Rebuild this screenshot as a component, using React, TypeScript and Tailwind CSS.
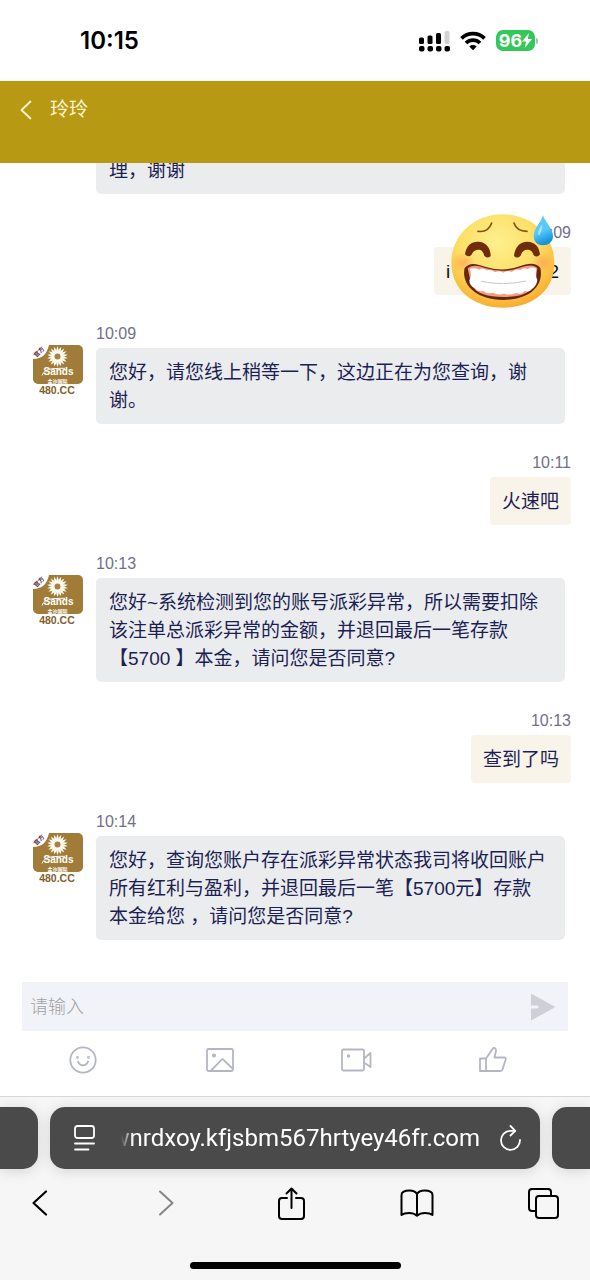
import React from 'react';

interface Message {
    id: number;
    from: 'agent' | 'user';
    time?: string;
    text: string;
    emoji?: boolean;
}

const messages: Message[] = [
    { id: 1, from: 'agent', text: '理，谢谢' },
    { id: 2, from: 'user', time: '10:09', text: 'i 2', emoji: true },
    { id: 3, from: 'agent', time: '10:09', text: '您好，请您线上稍等一下，这边正在为您查询，谢\n谢。' },
    { id: 4, from: 'user', time: '10:11', text: '火速吧' },
    {
        id: 5,
        from: 'agent',
        time: '10:13',
        text: '您好~系统检测到您的账号派彩异常，所以需要扣除\n该注单总派彩异常的金额，并退回最后一笔存款\n【5700 】本金，请问您是否同意?',
    },
    { id: 6, from: 'user', time: '10:13', text: '查到了吗' },
    {
        id: 7,
        from: 'agent',
        time: '10:14',
        text: '您好，查询您账户存在派彩异常状态我司将收回账户\n所有红利与盈利，并退回最后一笔【5700元】存款\n本金给您 ，请问您是否同意?',
    },
];

const rays = Array.from({ length: 18 }, (_, i) => i * 20);

const StatusBar = () => (
    <div className="flex h-[81px] shrink-0 items-center justify-between pl-[80px] pr-[52px] font-['Inter',sans-serif]">
        <span className="text-[24px] font-semibold leading-7 text-black">10:15</span>
        <div className="flex items-center gap-[10px]">
            <svg width="31" height="22" viewBox="0 0 31 22" aria-label="Signal">
                <rect x="0" y="7.500" width="5" height="6.500" rx="1.5" />
                <rect x="8.5" y="5.500" width="5" height="8.500" rx="1.5" />
                <rect x="17" y="3" width="5" height="11" rx="1.5" />
                <rect x="25.500" y="1" width="5" height="13" rx="1.5" fill="#d4d4d4" />
                <rect x="0" y="16" width="5.500" height="5.500" rx="2" />
                <rect x="8.5" y="16" width="5.500" height="5.500" rx="2" />
                <rect x="17" y="16" width="5.500" height="5.500" rx="2" />
                <rect x="25.500" y="16" width="5.500" height="5.500" rx="2" />
            </svg>
            <svg width="26" height="20" viewBox="0 0 26 20" fill="none" stroke="#000" strokeWidth="3.700" aria-label="Wi-Fi">
                <path d="M1.500 7.300a16.500 16.500 0 0 1 23 0" />
                <path d="M6 12a10 10 0 0 1 14 0" />
                <path d="M9.300 15.500a5.500 5.500 0 0 1 7.400 0L13 19.300z" fill="#000" stroke="none" />
            </svg>
            <div className="flex items-center gap-px">
                <div className="flex h-[21px] w-[39px] items-center justify-center rounded-[7px] bg-[#34c759] text-white">
                    <span className="text-[18px] font-bold leading-5">96</span>
                    <svg width="10" height="15" viewBox="0 0 10 15" fill="currentColor">
                        <path d="M7 0 0 8.500h4L2.800 15 10 6H5.800z" />
                    </svg>
                </div>
                <div className="h-[6px] w-[2px] rounded-r-full bg-[#a9bccb]" />
            </div>
        </div>
    </div>
);

const Avatar = () => (
    <svg className="mt-[21px] shrink-0 overflow-visible" width="50" height="50" viewBox="0 0 50 50" role="img" aria-label="Sands 480.CC">
        <path d="M16 0h29a5 5 0 0 1 5 5v29a5 5 0 0 1-5 5H5a5 5 0 0 1-5-5V14C9 14 14 9 16 0z" fill="#a07c38" />
        <g transform="translate(24.500 11.500)">
            {rays.map((angle) => (
                <path key={angle} d="M-1.300-4Q-1.500-7 0-10.500Q1.500-7 1.300-4z" fill="#fffaf0" transform={`rotate(${angle})`} />
            ))}
            <circle r="4.800" fill="#fffaf0" />
            <circle r="3" fill="#a58245" />
        </g>
        <g fontFamily="'Noto Sans CJK SC', sans-serif" fontWeight="700">
            <text x="6" y="9" fontSize="6" fill="#5b2340" textAnchor="middle" transform="rotate(-45 6 7)">官方</text>
            <text x="24.500" y="38" fontSize="5" fill="#fff" textAnchor="middle">金沙国际</text>
        </g>
        <path d="M9 30.500Q11 24.500 19 23.800T32 23.300" fill="none" stroke="#fff" strokeWidth="1" />
        <text x="25.500" y="30" fontSize="10" fontWeight="700" fontFamily="'Liberation Sans', sans-serif" fill="#fff" textAnchor="middle">Sands</text>
        <text x="24" y="48.500" fontSize="10.500" fontWeight="700" fontFamily="'Liberation Sans', sans-serif" fill="#80602c" textAnchor="middle">480.CC</text>
    </svg>
);

const GrinEmoji = () => (
    <svg className="absolute -top-[11px] right-[34px]" width="107" height="98" viewBox="69 36 321 294" role="img" aria-label="Grinning face with sweat">
        <defs>
            <radialGradient id="face" cx="0.45" cy="0.3" r="0.75">
                <stop offset="0" stopColor="#fdf08f" />
                <stop offset="0.5" stopColor="#fcdf66" />
                <stop offset="0.85" stopColor="#fbb93a" />
                <stop offset="1" stopColor="#f7a52c" />
            </radialGradient>
            <radialGradient id="cheek">
                <stop offset="0" stopColor="#ff9254" stopOpacity="0.55" />
                <stop offset="1" stopColor="#ff9254" stopOpacity="0" />
            </radialGradient>
            <linearGradient id="drop" x1="0" y1="0" x2="0.3" y2="1">
                <stop offset="0" stopColor="#62c9f2" />
                <stop offset="0.6" stopColor="#58c8f7" />
                <stop offset="1" stopColor="#1593dc" />
            </linearGradient>
        </defs>
        <path d="M229 43C315 43 385 105 385 190C385 273 318 323 232 323C143 323 76 270 76 188C76 105 145 43 229 43z" fill="url(#face)" />
        <ellipse cx="112" cy="187" rx="36" ry="30" fill="url(#cheek)" />
        <ellipse cx="350" cy="187" rx="34" ry="30" fill="url(#cheek)" />
        <g fill="none" stroke="#89500f" strokeWidth="5" strokeLinecap="round">
            <path d="M156 94Q187 98 197 69" />
            <path d="M264 69Q272 94 303 94" />
        </g>
        <g fill="#702d0a">
            <path d="M117 163C121 135 137 124 157 125C180 126 194 143 194 168Q185 178 175 167C171 153 165 148 156 149C146 150 140 155 136 165Q126 173 117 163z" />
            <path d="M264 168C267 140 282 125 304 125C326 125 340 140 342 163Q334 175 323 166C319 154 314 149 304 149C295 149 288 154 284 167Q273 178 264 168z" />
        </g>
        <path d="M116 204C132 184 155 193 177 200Q230 217 281 199C304 190 329 185 343 204C354 253 317 299 232 300C145 299 105 250 116 204z" fill="#65280e" />
        <path d="M125 205C142 191 160 199 180 205Q230 220 279 204C302 196 324 192 334 205L327 254C307 285 276 290 232 291C184 289 153 283 136 254z" fill="#f69a83" />
        <path d="M131 206Q146 202 160 209Q171 201 182 211Q196 207 207 217Q218 210 232 218Q244 209 257 216Q270 206 283 210Q294 201 304 207Q320 199 331 206Q327 226 334 240Q332 257 319 266Q309 278 296 273Q288 285 270 279Q253 287 234 281Q217 287 200 278Q181 283 172 273Q153 276 147 264Q131 258 130 242Q139 223 131 206z" fill="#fff" />
        <path d="M166 244Q232 258 300 243" fill="none" stroke="#c7c7ca" strokeWidth="3" />
        <path d="M351 46C345 68 323 84 323 109C323 126 336 136 351 136C367 136 381 126 381 109C381 84 358 68 351 46z" fill="url(#drop)" />
        <path d="M337 93Q343 79 349 73Q350 91 340 106Q334 105 337 93z" fill="#aee8fc" opacity="0.8" />
    </svg>
);

const MessageRow: React.FC<{ message: Message }> = ({ message }) => {
    if (message.from === 'user') {
        return (
            <div className="relative flex shrink-0 flex-col items-end pr-[19px]">
                <time className="mb-1 text-[16px] leading-5 text-[#717089]">{message.time}</time>
                <div className={`flex rounded-[4px] bg-[#f8f4e9] px-3 pb-[9px] pt-[11px] text-[19px] leading-7 ${message.emoji ? 'w-[137px] justify-between text-[#101010]' : 'text-[#1c1f54]'}`}>
                    {message.emoji ? message.text.split(' ').map((part) => <span key={part}>{part}</span>) : message.text}
                </div>
                {message.emoji && <GrinEmoji />}
            </div>
        );
    }
    // a message without a time continues the previous one, so it has no avatar
    return (
        <div className="flex shrink-0 gap-[13px] pl-[33px] pr-[25px]">
            {message.time ? <Avatar /> : <div className="w-[50px]" />}
            <div className="flex min-w-0 flex-1 flex-col">
                {message.time && <time className="mb-1 text-[16px] leading-5 text-[#717089]">{message.time}</time>}
                <p className="whitespace-pre-line rounded-[5px] bg-[#ebecee] pb-[9px] pl-[13px] pt-[11px] text-[19px] leading-7 text-[#1c1f54]">{message.text}</p>
            </div>
        </div>
    );
};

const Composer = () => (
    <form className="shrink-0" onSubmit={(e) => e.preventDefault()}>
        <div className="mx-[22px] flex h-[49px] items-center bg-[#f2f3f8] pl-2 pr-3">
            <input
                type="text"
                aria-label="请输入"
                placeholder="请输入"
                className="min-w-0 flex-1 bg-transparent text-[18px] font-light leading-6 outline-none placeholder:text-[#a0a0a4]"
            />
            <button type="submit" aria-label="发送">
                <svg width="26" height="28" viewBox="0 0 26 28" fill="#cfcfda">
                    <path d="M1 0.500 25.500 14 1 27.500V15.500h6l2-1.500-2-1.500H1z" />
                </svg>
            </button>
        </div>
        <div className="grid h-[65px] grid-cols-4 items-center justify-items-center pb-2 pl-[15px] pr-[29px] text-[#b4b7c3]">
            <button type="button" aria-label="表情">
                <svg width="28" height="28" viewBox="0 0 28 28" fill="none" stroke="currentColor" strokeWidth="1.800" strokeLinecap="round">
                    <circle cx="14" cy="14" r="12.700" />
                    <path d="M9 15.500a5.200 5.200 0 0 0 10 0" />
                    <circle cx="8.500" cy="11.500" r="0.500" />
                    <circle cx="19.500" cy="11.500" r="0.500" />
                </svg>
            </button>
            <button type="button" aria-label="图片">
                <svg width="28" height="26" viewBox="0 0 28 26" fill="none" stroke="currentColor" strokeWidth="1.800" strokeLinejoin="round">
                    <rect x="1" y="2" width="26" height="22" rx="1.500" />
                    <path d="M5 23.500 15.500 12.800Q16.500 11.800 17.500 12.800L27 22" />
                    <circle cx="8" cy="8.500" r="1.200" fill="currentColor" />
                </svg>
            </button>
            <button type="button" aria-label="视频">
                <svg width="31" height="24" viewBox="0 0 31 24" fill="none" stroke="currentColor" strokeWidth="1.800" strokeLinejoin="round">
                    <rect x="1" y="1.500" width="22" height="21" rx="1.500" />
                    <path d="M23 10.500 29.500 5v14L23 14.500" />
                    <circle cx="7.500" cy="8" r="0.800" fill="currentColor" />
                </svg>
            </button>
            <button type="button" aria-label="评价">
                <svg width="28" height="28" viewBox="0 0 28 28" fill="none" stroke="currentColor" strokeWidth="1.800" strokeLinejoin="round">
                    <path d="M1 12.500h6V25H1z" />
                    <path d="M7 12.500 13.500 3Q14.500 1.200 16 2.200 17.500 3.300 17 5L15.500 11.500H25.500Q27.200 11.700 26.700 13.500L23.500 23.500Q23 25 21.500 25H7" />
                </svg>
            </button>
        </div>
    </form>
);

const BrowserBar = () => (
    <footer className="shrink-0 border-t border-[#d8d8d8] bg-[#f6f6f6] pt-[10px]">
        <div className="flex h-[62px] gap-3">
            <div className="w-[38px] rounded-r-[15px] bg-[#4a4a4a] shadow-[0_2px_14px_rgba(0,0,0,0.14)]" />
            <div className="flex min-w-0 flex-1 items-center rounded-[15px] bg-[#4a4a4a] pl-6 pr-[18px] text-white shadow-[0_2px_14px_rgba(0,0,0,0.14)]">
                <button type="button" aria-label="Page menu" className="shrink-0">
                    <svg width="21" height="26" viewBox="0 0 21 26" fill="none" stroke="currentColor" strokeWidth="1.800" strokeLinecap="round">
                        <rect x="1" y="1" width="19" height="12" rx="2.500" />
                        <path d="M1 18.500h19M1 24.500h13.500" />
                    </svg>
                </button>
                <div className="ml-[26px] flex min-w-0 flex-1 justify-end overflow-hidden font-['Roboto',sans-serif] text-[24px] leading-8 [mask-image:linear-gradient(to_right,transparent,black_12px)]">
                    <span className="whitespace-nowrap">wnrdxoy.kfjsbm567hrtyey46fr.com</span>
                </div>
                <button type="button" aria-label="Reload" className="ml-[19px] shrink-0">
                    <svg width="23" height="26" viewBox="0 0 23 26" fill="none" stroke="currentColor" strokeWidth="1.800" strokeLinecap="round" strokeLinejoin="round">
                        <path d="M16 5.800H11.500A9.500 9.500 0 1 0 21 15" />
                        <path d="m11.500 1 4.700 4.800-4.700 4.700" />
                    </svg>
                </button>
            </div>
            <div className="w-[38px] rounded-l-[15px] bg-[#4a4a4a] shadow-[0_2px_14px_rgba(0,0,0,0.14)]" />
        </div>
        <nav className="flex h-[68px] items-center justify-between pl-5 pr-[27px] text-black">
            <button type="button" aria-label="Back" className="flex w-10 justify-center">
                <svg width="16" height="26" viewBox="0 0 16 26" fill="none" stroke="currentColor" strokeWidth="2.200" strokeLinecap="round" strokeLinejoin="round">
                    <path d="M14 1.500 1.500 13 14 24.500" />
                </svg>
            </button>
            <button type="button" aria-label="Forward" className="flex w-10 justify-center text-[#858585]">
                <svg width="16" height="26" viewBox="0 0 16 26" fill="none" stroke="currentColor" strokeWidth="2" strokeLinecap="round" strokeLinejoin="round">
                    <path d="M2 1.500 14.500 13 2 24.500" />
                </svg>
            </button>
            <button type="button" aria-label="Share" className="flex w-10 justify-center">
                <svg width="27" height="33" viewBox="0 0 27 33" fill="none" stroke="currentColor" strokeWidth="2" strokeLinecap="round" strokeLinejoin="round">
                    <path d="M9 11H4Q1 11 1 14v15q0 3 3 3h19q3 0 3-3V14q0-3-3-3h-5" />
                    <path d="M13.500 21V1.500M8.500 6.500l5-5 5 5" />
                </svg>
            </button>
            <button type="button" aria-label="Bookmarks" className="flex w-10 justify-center">
                <svg width="34" height="28" viewBox="0 0 34 28" fill="none" stroke="currentColor" strokeWidth="2" strokeLinejoin="round">
                    <path d="M17 5Q15 1.500 9.500 1.500 1.500 1.500 1.500 6v20Q4 24 9 24t8 2.700q3-2.700 8-2.700t7.500 2V6q0-4.500-8-4.500Q19 1.500 17 5zM17 5v21.700" />
                </svg>
            </button>
            <button type="button" aria-label="Tabs" className="flex w-10 justify-center">
                <svg width="31" height="31" viewBox="0 0 31 31" fill="none" stroke="currentColor" strokeWidth="2" strokeLinejoin="round">
                    <path d="M8 23H4q-3 0-3-3V4q0-3 3-3h16q3 0 3 3v4" />
                    <rect x="8" y="8" width="22" height="22" rx="3" />
                </svg>
            </button>
        </nav>
        <div className="flex justify-center pb-[11px] pt-[25px]">
            <div className="h-[7px] w-[211px] rounded-full bg-black" />
        </div>
    </footer>
);

const App: React.FC = () => {
    return (
        <div className="flex h-screen flex-col bg-white font-['Liberation_Sans','Noto_Sans_CJK_SC',sans-serif]">
            <StatusBar />
            <header className="z-10 h-[82px] shrink-0 bg-[#b89913] px-5 pt-[15px] text-[#fdf5d2]">
                <div className="flex items-center gap-[18px]">
                    <button type="button" aria-label="返回">
                        <svg width="12" height="20" viewBox="0 0 12 20" fill="none" stroke="currentColor" strokeWidth="1.800" strokeLinecap="round" strokeLinejoin="round">
                            <path d="M10.500 1.500 1.500 10l9 8.500" />
                        </svg>
                    </button>
                    <h1 className="text-[19px] leading-7">玲玲</h1>
                </div>
            </header>
            <main className="flex min-h-0 flex-1 flex-col justify-end gap-[29px] overflow-hidden pb-[42px]">
                {messages.map((message) => (
                    <MessageRow key={message.id} message={message} />
                ))}
            </main>
            <Composer />
            <BrowserBar />
        </div>
    );
};

export default App;
